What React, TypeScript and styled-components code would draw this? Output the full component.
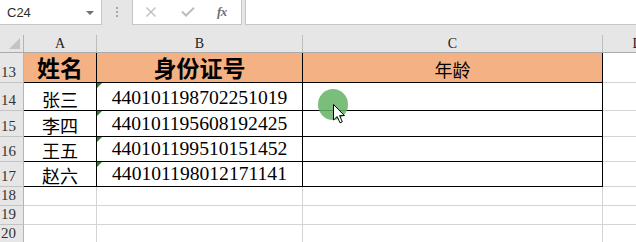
import React from "react";
import styled, { createGlobalStyle, css } from "styled-components";

const GlobalStyle = createGlobalStyle`
  html, body { margin: 0; padding: 0; background: #ffffff; overflow: hidden; }
  * { box-sizing: border-box; }
`;

const Window = styled.div`
  position: relative;
  width: 636px;
  height: 242px;
  overflow: hidden;
  background: #ffffff;
  font-family: "Liberation Serif", serif;
`;

const FormulaBar = styled.div`
  display: flex;
  height: 25px;
  background: #e6e6e6;
`;

const NameBox = styled.div`
  width: 102px;
  height: 25px;
  background: #ffffff;
  border-right: 1px solid #c6c6c6;
  border-bottom: 1px solid #c6c6c6;
  display: flex;
  align-items: center;
  justify-content: space-between;
  padding: 0 7px 0 7px;
  font-family: "Liberation Sans", Arial, sans-serif;
  font-size: 13px;
  color: #2b2b2b;
`;

const Caret = styled.span`
  width: 0;
  height: 0;
  border-left: 4px solid transparent;
  border-right: 4px solid transparent;
  border-top: 4px solid #707070;
  margin-top: 1px;
`;

const Grip = styled.div`
  width: 30px;
  display: flex;
  flex-direction: column;
  align-items: center;
  justify-content: center;
  gap: 2px;
  padding-bottom: 1px;
`;

const GripDot = styled.span`
  width: 2px;
  height: 2px;
  background: #a8a8a8;
`;

const FuncBox = styled.div`
  width: 110px;
  height: 25px;
  background: #ffffff;
  border-left: 1px solid #c6c6c6;
  border-right: 1px solid #c6c6c6;
  border-bottom: 1px solid #c6c6c6;
  display: flex;
  align-items: center;
  padding-left: 12px;
  gap: 0;
`;

const IconSlot = styled.span`
  width: 36px;
  display: flex;
  align-items: center;
  justify-content: flex-start;
`;

const Fx = styled.span`
  font-family: "Liberation Serif", serif;
  font-style: italic;
  font-weight: bold;
  font-size: 13px;
  color: #6f6f6f;
  letter-spacing: -0.5px;
`;

const FormulaInput = styled.div`
  flex: 1;
  margin-left: 3px;
  height: 25px;
  background: #ffffff;
  border-left: 1px solid #c6c6c6;
  border-bottom: 1px solid #c6c6c6;
`;

const Band = styled.div`
  height: 10px;
  background: #e6e6e6;
`;

const Sheet = styled.div`
  display: grid;
  grid-template-columns: 24px 73px 206px 300px 70px;
  grid-template-rows: 18px 30px 28px 26px 25px 25px 19px 19px 19px;
`;

const Corner = styled.div`
  position: relative;
  background: #e6e6e6;
  border-right: 1px solid #b4b4b4;
  border-bottom: 1px solid #ababab;
  &::after {
    content: "";
    position: absolute;
    right: 3px;
    bottom: 3px;
    width: 0;
    height: 0;
    border-left: 11px solid transparent;
    border-bottom: 11px solid #c4c4c4;
  }
`;

const ColHead = styled.div`
  background: #e6e6e6;
  border-right: 1px solid #bdbdbd;
  border-bottom: 1px solid #ababab;
  display: flex;
  align-items: center;
  justify-content: center;
  font-family: "Liberation Serif", serif;
  font-size: 14px;
  color: #222;
  padding-top: 1px;
`;

const RowHead = styled.div`
  background: #e6e6e6;
  border-right: 1px solid #b4b4b4;
  border-bottom: 1px solid #c4c4c4;
  display: flex;
  align-items: flex-end;
  padding-left: 1px;
  padding-bottom: 2px;
  font-family: "Liberation Serif", serif;
  font-size: 15px;
  line-height: 1;
  color: #333;
`;

const Cell = styled.div<{ $table?: boolean; $head?: boolean; $flag?: boolean }>`
  position: relative;
  background: ${(p) => (p.$head ? "#f4b183" : "#ffffff")};
  border-right: 1px solid ${(p) => (p.$table ? "#000000" : "#d4d4d4")};
  border-bottom: 1px solid ${(p) => (p.$table ? "#000000" : "#d4d4d4")};
  display: flex;
  align-items: flex-end;
  justify-content: center;
  padding-bottom: 3px;
  line-height: 1;
  color: #000;
  ${(p) =>
    p.$flag &&
    css`
      &::before {
        content: "";
        position: absolute;
        left: 0;
        top: 0;
        width: 0;
        height: 0;
        border-top: 5px solid #1e8a1e;
        border-right: 5px solid transparent;
      }
    `}
`;

const OpenCell = styled.div`
  border-bottom: 1px solid #d4d4d4;
`;

const HeadText = styled.span<{ $bold?: boolean }>`
  font-family: "Noto Sans CJK SC", sans-serif;
  font-size: ${(p) => (p.$bold ? "23px" : "18px")};
  font-weight: ${(p) => (p.$bold ? 700 : 400)};
  margin-bottom: ${(p) => (p.$bold ? "0px" : "1px")};
`;

const NameText = styled.span`
  font-family: "Noto Sans CJK SC", sans-serif;
  font-size: 18px;
  margin-bottom: -1px;
`;

const IdText = styled.span`
  font-family: "Liberation Serif", serif;
  font-size: 19.6px;
  margin-bottom: -1px;
`;

const Pointer = styled.div`
  position: absolute;
  left: 318px;
  top: 89px;
  width: 30px;
  height: 31px;
  border-radius: 50%;
  background: rgba(100, 178, 100, 0.85);
`;

const Arrow = styled.svg`
  position: absolute;
  left: 333px;
  top: 104px;
`;

const rows = [
  { n: "14", name: "张三", id: "440101198702251019" },
  { n: "15", name: "李四", id: "440101195608192425" },
  { n: "16", name: "王五", id: "440101199510151452" },
  { n: "17", name: "赵六", id: "440101198012171141" },
];

export default function App() {
  return (
    <>
      <GlobalStyle />
      <Window>
        <FormulaBar>
          <NameBox>
            <span>C24</span>
            <Caret />
          </NameBox>
          <Grip>
            <GripDot />
            <GripDot />
            <GripDot />
          </Grip>
          <FuncBox>
            <IconSlot>
              <svg width="12" height="10" viewBox="0 0 12 10">
                <path d="M1.5 0.5 L10.5 9.5 M10.5 0.5 L1.5 9.5" stroke="#bdbdbd" strokeWidth="1.4" fill="none" />
              </svg>
            </IconSlot>
            <IconSlot>
              <svg width="14" height="10" viewBox="0 0 14 10">
                <path d="M1 4.5 L5 8.5 L13 0.8" stroke="#bdbdbd" strokeWidth="2" fill="none" />
              </svg>
            </IconSlot>
            <Fx>fx</Fx>
          </FuncBox>
          <FormulaInput />
        </FormulaBar>
        <Band />
        <Sheet>
          <Corner />
          <ColHead>A</ColHead>
          <ColHead>B</ColHead>
          <ColHead>C</ColHead>
          <ColHead>D</ColHead>

          <RowHead>13</RowHead>
          <Cell $table $head>
            <HeadText $bold>姓名</HeadText>
          </Cell>
          <Cell $table $head>
            <HeadText $bold>身份证号</HeadText>
          </Cell>
          <Cell $table $head>
            <HeadText>年龄</HeadText>
          </Cell>
          <OpenCell />

          {rows.map((r) => (
            <React.Fragment key={r.n}>
              <RowHead>{r.n}</RowHead>
              <Cell $table>
                <NameText>{r.name}</NameText>
              </Cell>
              <Cell $table $flag>
                <IdText>{r.id}</IdText>
              </Cell>
              <Cell $table />
              <OpenCell />
            </React.Fragment>
          ))}

          {["18", "19", "20"].map((n) => (
            <React.Fragment key={n}>
              <RowHead>{n}</RowHead>
              <Cell />
              <Cell />
              <Cell />
              <OpenCell />
            </React.Fragment>
          ))}
        </Sheet>
        <Pointer />
        <Arrow width="13" height="20" viewBox="0 0 13 20">
          <path d="M0.5 0.5 L0.5 16 L4.2 12.6 L7 18.8 L9.3 17.8 L6.6 11.6 L11.5 11.6 Z" fill="#ffffff" stroke="#000000" strokeWidth="1" strokeLinejoin="miter" />
        </Arrow>
      </Window>
    </>
  );
}
